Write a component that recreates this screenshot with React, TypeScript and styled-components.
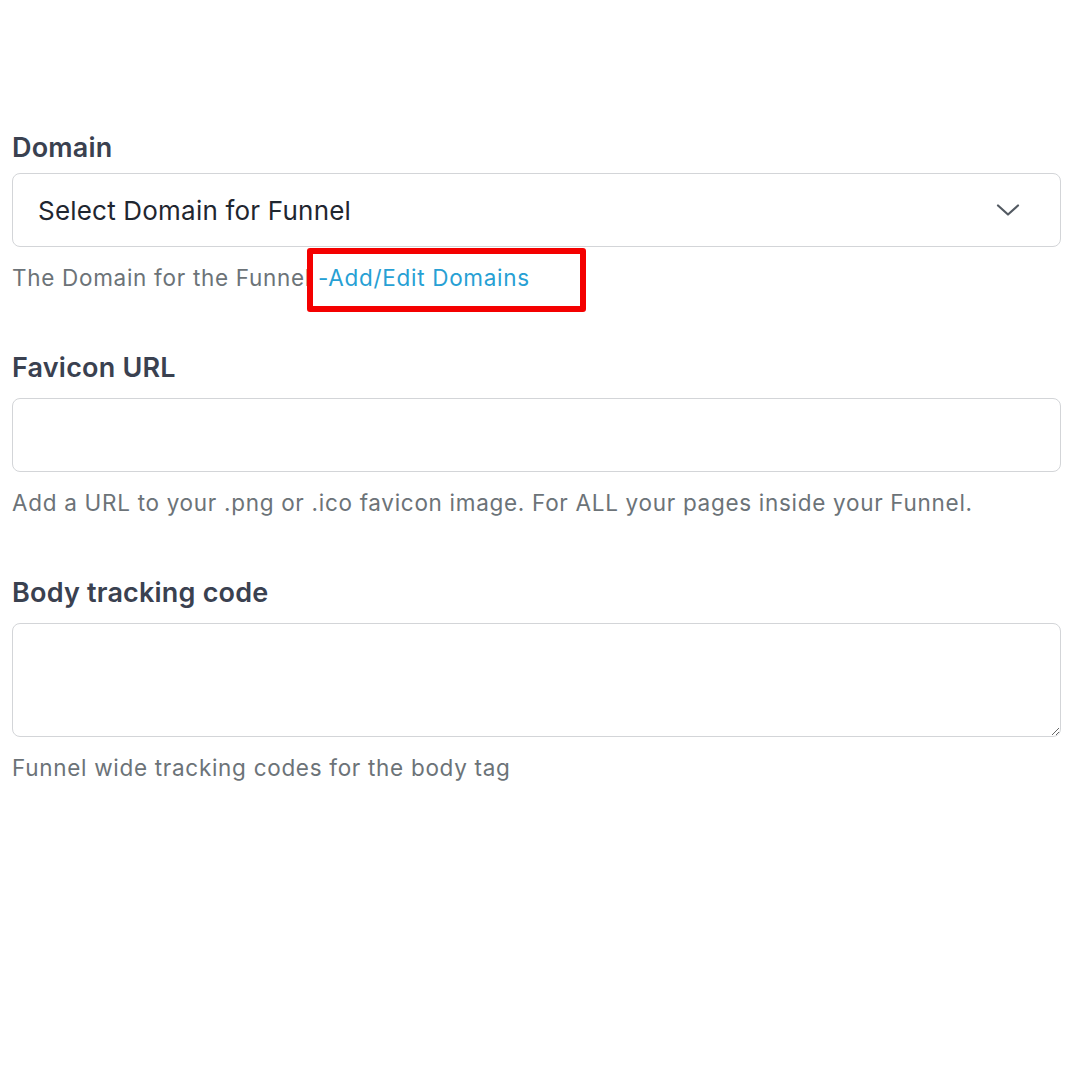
import React from "react";
import styled, { createGlobalStyle } from "styled-components";

const GlobalStyle = createGlobalStyle`
  html, body {
    margin: 0;
    padding: 0;
    background: #ffffff;
    font-family: Inter, "Noto Sans", "Liberation Sans", sans-serif;
  }
`;

export default function App() {
  return (
    <>
      <GlobalStyle />
      <Page>
        <Field>
          <Label $gap={7}>Domain</Label>
          <SelectBox>
            <SelectText>Select Domain for Funnel</SelectText>
            <Chevron viewBox="0 0 24 12">
              <path d="M2 1.5l10 9 10-9" />
            </Chevron>
          </SelectBox>
          <HelpRow>
            <Help>
              The Domain for the Funnel <Link>-Add/Edit Domains</Link>
            </Help>
            <Highlight />
          </HelpRow>
        </Field>
        <Field>
          <Label>Favicon URL</Label>
          <TextInput />
          <Help>
            Add a URL to your .png or .ico favicon image. For ALL your pages inside your Funnel.
          </Help>
        </Field>
        <Field>
          <Label>Body tracking code</Label>
          <TextArea />
          <Help>Funnel wide tracking codes for the body tag</Help>
        </Field>
      </Page>
    </>
  );
}

const Page = styled.div`
  width: 1080px;
  height: 1080px;
  box-sizing: border-box;
  padding: 130px 19px 0 12px;
  display: flex;
  flex-direction: column;
  gap: 57px;
`;
const Field = styled.div`
  display: flex;
  flex-direction: column;
`;
const Label = styled.label<{ $gap?: number }>`
  font-size: 27px;
  font-weight: 600;
  color: #3a4150;
  line-height: 36px;
  letter-spacing: 0.2px;
  margin-bottom: ${(p) => p.$gap ?? 12}px;
`;
const SelectBox = styled.div`
  height: 74px;
  box-sizing: border-box;
  border: 1.5px solid #d3d5d8;
  border-radius: 8px;
  display: flex;
  align-items: center;
  justify-content: space-between;
  padding: 0 40px 0 25px;
`;
const SelectText = styled.span`
  font-size: 26px;
  letter-spacing: 0.2px;
  color: #1f2630;
`;
const Chevron = styled.svg`
  width: 24px;
  height: 12px;
  fill: none;
  stroke: #535a62;
  stroke-width: 2.2;
  stroke-linecap: round;
  stroke-linejoin: round;
`;
const HelpRow = styled.div`
  position: relative;
`;
const Help = styled.p`
  margin: 16px 0 0;
  font-size: 22.5px;
  line-height: 30px;
  color: #6c7378;
  letter-spacing: 0.7px;
`;
const Link = styled.span`
  color: #27a0d4;
`;
const Highlight = styled.div`
  position: absolute;
  left: 295px;
  top: 1px;
  width: 279px;
  height: 64px;
  box-sizing: border-box;
  border: 6px solid #f40000;
  border-radius: 3px;
`;
const TextInput = styled.div`
  height: 74px;
  box-sizing: border-box;
  border: 1.5px solid #d3d5d8;
  border-radius: 8px;
`;
const TextArea = styled.textarea`
  height: 114px;
  box-sizing: border-box;
  border: 1.5px solid #d3d5d8;
  border-radius: 8px;
  resize: vertical;
  font: inherit;
`;
